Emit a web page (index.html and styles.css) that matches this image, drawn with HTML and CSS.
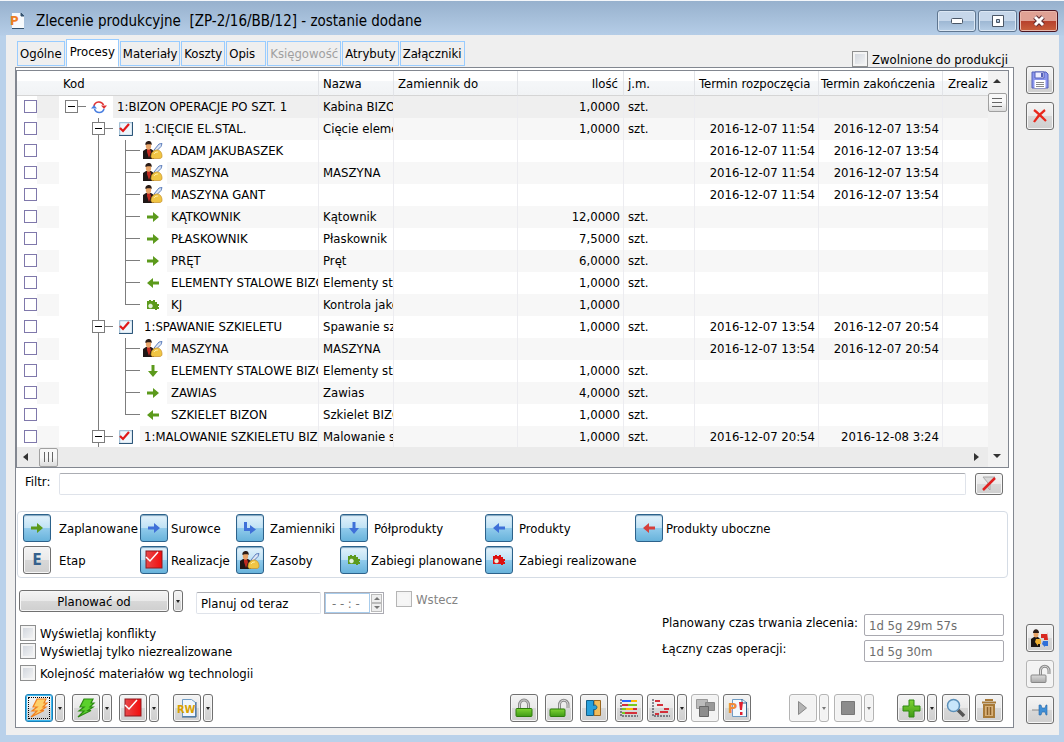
FILE: index.html
```html
<!DOCTYPE html>
<html lang="pl">
<head>
<meta charset="utf-8">
<title>Zlecenie produkcyjne</title>
<link rel="stylesheet" href="styles.css">
</head>
<body>
<svg class="defs" aria-hidden="true">
  <defs>
    <linearGradient id="g-green" x1="0" y1="0" x2="0" y2="1"><stop offset="0" stop-color="#7fd433"/><stop offset="1" stop-color="#3f9a16"/></linearGradient>
    <linearGradient id="g-grey" x1="0" y1="0" x2="0" y2="1"><stop offset="0" stop-color="#dcdcdc"/><stop offset="1" stop-color="#a8a8a8"/></linearGradient>
    <linearGradient id="g-red" x1="0" y1="0" x2="1" y2="0"><stop offset="0" stop-color="#e8484a"/><stop offset="1" stop-color="#f20d0d"/></linearGradient>
  </defs>
  <symbol id="box" viewBox="0 0 13 13"><rect x=".5" y=".5" width="12" height="12" fill="#fff" stroke="#7d7d7d"/><path d="M3 6.5h7" stroke="#000"/></symbol>
  <symbol id="arrow" viewBox="0 0 12 12"><path d="M0 4.5h6V1l6 5-6 5V7.500H0z"/></symbol>
  <symbol id="hook" viewBox="0 0 12 12"><path d="M0 0h3v6h3V3l6 4.500-6 4.500V9H0z"/></symbol>
  <symbol id="gear" viewBox="0 0 12 12"><path d="M0 2h2V1h2v1h2V1h2v2h2v2h2v2h-1v1h1v2h-2v1H8v-1H0z"/><circle cx="3.500" cy="7" r="2" fill="#e4f3dc" stroke="#fff" stroke-opacity=".4"/></symbol>
  <symbol id="worker" viewBox="0 0 20 18">
    <path d="M0 18V10l3-2h5l3 2v8z" fill="#1f1716"/><path d="M4 8h3l1 3-2 6-2-6z" fill="#c02a20"/>
    <ellipse cx="5.500" cy="5" rx="2.700" ry="3.700" fill="#e7a468"/><path d="M2.500 4C2 1 4 0 6 0s3 2 2.700 4L7.500 3.200h-3z" fill="#2b1c16"/>
    <path d="M11 9l5-6 3-.5-1 3-5 5z" fill="#dde6f5" stroke="#5d7fbd"/>
    <path d="M8 16c0-5 3-7 6-7 4 0 5 4 5 6s-1 2.500-3 2.500H9z" fill="#f0c544" stroke="#c58f26" stroke-width=".7"/><path d="M11 13c1-2 3-2 4-2" stroke="#fff0a8" fill="none"/>
  </symbol>
  <symbol id="tick" viewBox="0 0 14 14"><rect x=".7" y=".7" width="12.600" height="12.600" fill="#eef6fc" stroke="#8fb2cc"/><path d="M13.500 0v13.500H0" fill="none" stroke="#2d5679"/><path d="M1 6l3 3 6-7" fill="none" stroke="#e01818" stroke-width="2.200"/></symbol>
  <symbol id="cycle" viewBox="0 0 16 14"><path d="M3 6a5 5 0 0 1 9.500-1" fill="none" stroke="#e03434" stroke-width="1.600"/><path d="M10 5.500h6l-3 3.500z" fill="#e03434"/><path d="M13 9a5 5 0 0 1-9.500 0" fill="none" stroke="#4a7fe0" stroke-width="1.600"/><path d="M0 8.500h6L3 5z" fill="#4a7fe0"/></symbol>
  <symbol id="t0" viewBox="0 0 54 22"><use href="#box" x="6" y="4" width="13" height="13"/><path d="M19 10.500h8" stroke="#7d7d7d"/><use href="#cycle" x="32" y="4" width="16" height="14"/></symbol>
  <symbol id="t1" viewBox="0 0 81 22"><path d="M39.500 0v22M46 10.500h8" stroke="#7d7d7d"/><use href="#box" x="33" y="4" width="13" height="13"/><use href="#tick" x="60" y="4" width="14" height="14"/></symbol>
  <symbol id="t2" viewBox="0 0 108 22"><path d="M39.500 0v22M66.500 0v22M67 10.500h14" stroke="#7d7d7d"/></symbol>
  <symbol id="t2w" viewBox="0 0 108 22"><use href="#t2" width="108" height="22"/><use href="#worker" x="84" y="1" width="20" height="18"/></symbol>
  <symbol id="t2r" viewBox="0 0 108 22"><use href="#t2" width="108" height="22"/><use href="#arrow" x="88" y="5" width="12" height="12"/></symbol>
  <symbol id="t2d" viewBox="0 0 108 22"><use href="#t2" width="108" height="22"/><g transform="rotate(90 94 11)"><use href="#arrow" x="88" y="5" width="12" height="12"/></g></symbol>
  <symbol id="t2l" viewBox="0 0 108 22"><use href="#t2" width="108" height="22"/><g transform="rotate(180 94 11)"><use href="#arrow" x="88" y="5" width="12" height="12"/></g></symbol>
  <symbol id="t2e" viewBox="0 0 108 22"><path d="M39.500 0v22M66.500 0v11M67 10.500h14" stroke="#7d7d7d"/></symbol>
  <symbol id="bolt" viewBox="0 0 20 20"><path d="M8 1h9l-2 4h3l-4 4h3l-5 3.500h3L2 19l6-6H3l5-4H4z" stroke-width="1.200"/></symbol>
  <symbol id="redtick" viewBox="0 0 18 20"><rect x="1" y="1" width="16" height="17" fill="url(#g-red)" stroke="#8d1b20"/><path d="M1 7l4 4 8-9" fill="none" stroke="#fff" stroke-width="1.500"/></symbol>
  <symbol id="lock" viewBox="0 0 18 20"><path d="M4.500 11V7a4.500 5 0 0 1 9 0v4" fill="none" stroke="#8a8a8a" stroke-width="3"/><path d="M4.500 11V7a4.500 5 0 0 1 9 0v4" fill="none" stroke="#d5d5d5"/><rect x="1" y="10.500" width="16" height="8" rx="1" fill="url(#g-green)" stroke="#2e7d0c"/></symbol>
  <symbol id="unlock" viewBox="0 0 21 20"><path d="M10.500 11V7a4 4.500 0 0 1 8.500 0v3" fill="none" stroke="#8a8a8a" stroke-width="3"/><path d="M10.500 11V7a4 4.500 0 0 1 8.500 0v3" fill="none" stroke="#dedede"/><rect x="1" y="11" width="15" height="7.500" rx="1"/></symbol>
</svg>

<div class="window">
  <header class="titlebar">
    <svg class="app-icon" width="15" height="18" viewBox="0 0 15 18"><path d="M2 1h9l3 3v12H2z" fill="#f7fafc"/><path d="M11 1v3h3zM2 16.500h12" fill="#35536f" stroke="#35536f"/><text x="0" y="13" class="p-glyph">P</text></svg>
    <h1 class="title">Zlecenie produkcyjne&nbsp; [ZP-2/16/BB/12] - zostanie dodane</h1>
    <div class="win-buttons">
      <button class="win" aria-label="Minimalizuj"><svg width="14" height="8"><rect x="1.500" y="1.500" width="11" height="5" rx="1" fill="#fff" stroke="#4a5666"/></svg></button>
      <button class="win" aria-label="Maksymalizuj"><svg width="12" height="12"><path d="M.5.5h11v11H.5zM4.500 4.500v3h3v-3z" fill="#fff" fill-rule="evenodd" stroke="#4a5666"/></svg></button>
      <button class="win win-close" aria-label="Zamknij"><svg width="14" height="12" viewBox="0 0 14 12"><path d="M3 2l8 8M11 2l-8 8" stroke="#5a2a30" stroke-width="5"/><path d="M3 2l8 8M11 2l-8 8" stroke="#fff" stroke-width="3"/></svg></button>
    </div>
  </header>

  <div class="body">
    <main class="main">
      <div class="top">
        <nav class="tabs" role="tablist">
          <button class="tab" role="tab">Ogólne</button>
          <button class="tab tab-active" role="tab" aria-selected="true">Procesy</button>
          <button class="tab" role="tab">Materiały</button>
          <button class="tab" role="tab">Koszty</button>
          <button class="tab tab-opis" role="tab">Opis</button>
          <button class="tab" role="tab" disabled>Księgowość</button>
          <button class="tab" role="tab">Atrybuty</button>
          <button class="tab" role="tab">Załączniki</button>
        </nav>
        <label class="check released"><input type="checkbox" class="chk">Zwolnione do produkcji</label>
      </div>

      <section class="pane">
        <div class="list">
          <div class="list-main">
            <div class="viewport">
              <table class="table">
                <colgroup><col class="c-check"><col class="c-gap"><col><col class="c-name"><col class="c-date"><col class="c-qty"><col class="c-unit"><col class="c-date"><col class="c-date"><col class="c-done"></colgroup>
                <thead><tr><th></th><th></th><th>Kod</th><th>Nazwa</th><th>Zamiennik do</th><th class="num">Ilość</th><th>j.m.</th><th>Termin rozpoczęcia</th><th class="tight">Termin zakończenia</th><th class="done">Zrealiz</th></tr></thead>
                <tbody>
                <tr><td><input type="checkbox" class="row-chk" aria-label="1:BIZON OPERACJE PO SZT. 1"></td><td></td><td><div class="node"><svg class="tree t0"><use href="#t0"/></svg>1:BIZON OPERACJE PO SZT. 1</div></td><td>Kabina BIZON</td><td></td><td class="num">1,0000</td><td>szt.</td><td class="num"></td><td class="num"></td><td></td></tr>
                <tr><td><input type="checkbox" class="row-chk" aria-label="1:CIĘCIE EL.STAL."></td><td></td><td><div class="node"><svg class="tree t1"><use href="#t1"/></svg>1:CIĘCIE EL.STAL.</div></td><td>Cięcie elementów</td><td></td><td class="num">1,0000</td><td>szt.</td><td class="num">2016-12-07 11:54</td><td class="num">2016-12-07 13:54</td><td></td></tr>
                <tr><td><input type="checkbox" class="row-chk" aria-label="ADAM JAKUBASZEK"></td><td></td><td><div class="node"><svg class="tree t2"><use href="#t2w"/></svg>ADAM JAKUBASZEK</div></td><td></td><td></td><td class="num"></td><td></td><td class="num">2016-12-07 11:54</td><td class="num">2016-12-07 13:54</td><td></td></tr>
                <tr><td><input type="checkbox" class="row-chk" aria-label="MASZYNA"></td><td></td><td><div class="node"><svg class="tree t2"><use href="#t2w"/></svg>MASZYNA</div></td><td>MASZYNA</td><td></td><td class="num"></td><td></td><td class="num">2016-12-07 11:54</td><td class="num">2016-12-07 13:54</td><td></td></tr>
                <tr><td><input type="checkbox" class="row-chk" aria-label="MASZYNA GANT"></td><td></td><td><div class="node"><svg class="tree t2"><use href="#t2w"/></svg>MASZYNA GANT</div></td><td></td><td></td><td class="num"></td><td></td><td class="num">2016-12-07 11:54</td><td class="num">2016-12-07 13:54</td><td></td></tr>
                <tr><td><input type="checkbox" class="row-chk" aria-label="KĄTKOWNIK"></td><td></td><td><div class="node"><svg class="tree t2"><use href="#t2r"/></svg>KĄTKOWNIK</div></td><td>Kątownik</td><td></td><td class="num">12,0000</td><td>szt.</td><td></td><td></td><td></td></tr>
                <tr><td><input type="checkbox" class="row-chk" aria-label="PŁASKOWNIK"></td><td></td><td><div class="node"><svg class="tree t2"><use href="#t2r"/></svg>PŁASKOWNIK</div></td><td>Płaskownik</td><td></td><td class="num">7,5000</td><td>szt.</td><td></td><td></td><td></td></tr>
                <tr><td><input type="checkbox" class="row-chk" aria-label="PRĘT"></td><td></td><td><div class="node"><svg class="tree t2"><use href="#t2r"/></svg>PRĘT</div></td><td>Pręt</td><td></td><td class="num">6,0000</td><td>szt.</td><td></td><td></td><td></td></tr>
                <tr><td><input type="checkbox" class="row-chk" aria-label="ELEMENTY STALOWE BIZON"></td><td></td><td><div class="node"><svg class="tree t2"><use href="#t2l"/></svg>ELEMENTY STALOWE BIZON</div></td><td>Elementy stalowe</td><td></td><td class="num">1,0000</td><td>szt.</td><td></td><td></td><td></td></tr>
                <tr><td><input type="checkbox" class="row-chk" aria-label="KJ"></td><td></td><td><div class="node"><svg class="tree t2"><use href="#t2e"/><use href="#gear" x="88" y="5" width="12" height="12"/></svg>KJ</div></td><td>Kontrola jakości</td><td></td><td class="num">1,0000</td><td></td><td></td><td></td><td></td></tr>
                <tr><td><input type="checkbox" class="row-chk" aria-label="1:SPAWANIE SZKIELETU"></td><td></td><td><div class="node"><svg class="tree t1"><use href="#t1"/></svg>1:SPAWANIE SZKIELETU</div></td><td>Spawanie szkieletu</td><td></td><td class="num">1,0000</td><td>szt.</td><td class="num">2016-12-07 13:54</td><td class="num">2016-12-07 20:54</td><td></td></tr>
                <tr><td><input type="checkbox" class="row-chk" aria-label="MASZYNA, spawanie"></td><td></td><td><div class="node"><svg class="tree t2"><use href="#t2w"/></svg>MASZYNA</div></td><td>MASZYNA</td><td></td><td class="num"></td><td></td><td class="num">2016-12-07 13:54</td><td class="num">2016-12-07 20:54</td><td></td></tr>
                <tr><td><input type="checkbox" class="row-chk" aria-label="ELEMENTY STALOWE BIZON, spawanie"></td><td></td><td><div class="node"><svg class="tree t2"><use href="#t2d"/></svg>ELEMENTY STALOWE BIZON</div></td><td>Elementy stalowe</td><td></td><td class="num">1,0000</td><td>szt.</td><td></td><td></td><td></td></tr>
                <tr><td><input type="checkbox" class="row-chk" aria-label="ZAWIAS"></td><td></td><td><div class="node"><svg class="tree t2"><use href="#t2r"/></svg>ZAWIAS</div></td><td>Zawias</td><td></td><td class="num">4,0000</td><td>szt.</td><td></td><td></td><td></td></tr>
                <tr><td><input type="checkbox" class="row-chk" aria-label="SZKIELET BIZON"></td><td></td><td><div class="node"><svg class="tree t2"><use href="#t2e"/><g transform="rotate(180 94 11)"><use href="#arrow" x="88" y="5" width="12" height="12"/></g></svg>SZKIELET BIZON</div></td><td>Szkielet BIZON</td><td></td><td class="num">1,0000</td><td>szt.</td><td></td><td></td><td></td></tr>
                <tr><td><input type="checkbox" class="row-chk" aria-label="1:MALOWANIE SZKIELETU BIZON"></td><td></td><td><div class="node"><svg class="tree t1"><use href="#t1"/></svg>1:MALOWANIE SZKIELETU BIZON</div></td><td>Malowanie szkieletu</td><td></td><td class="num">1,0000</td><td>szt.</td><td class="num">2016-12-07 20:54</td><td class="num">2016-12-08 3:24</td><td></td></tr>
                </tbody>
              </table>
            </div>
            <div class="hscroll">
              <svg width="8" height="10"><path d="M6 1v8L1 5z"/></svg>
              <div class="thumb"><svg width="11" height="10"><path d="M1.500 0v10M5.500 0v10M9.500 0v10" stroke="#666"/></svg></div>
              <svg class="push" width="8" height="10"><path d="M2 1v8l5-4z"/></svg>
            </div>
          </div>
          <div class="vscroll">
            <svg width="10" height="22"><path d="M1 12h8L5 8z"/></svg>
            <div class="thumb"><svg width="10" height="11"><path d="M0 1.500h10M0 5.500h10M0 9.500h10" stroke="#666"/></svg></div>
            <svg class="down" width="10" height="22"><path d="M1 9h8l-4 4z"/></svg>
          </div>
        </div>

        <div class="filter">
          <label for="filter">Filtr:</label>
          <input id="filter" type="text" class="field filter-field">
          <button class="btn filter-btn" aria-label="Wyczyść filtr"><svg width="16" height="16"><path d="M2 1h12L9 7v7l-2-2V7z" fill="#d8d8d8" stroke="#aaa"/><path d="M2 14L14 2" stroke="#e02020" stroke-width="2.500"/></svg></button>
        </div>

        <div class="legend">
          <div class="item gap-l"><button id="b1" class="btn blue"><svg width="12" height="12" fill="#5c9a1c"><use href="#arrow"/></svg></button><label for="b1">Zaplanowane</label></div>
          <div class="item"><button id="b2" class="btn blue"><svg width="12" height="12" fill="#3f70d8"><use href="#arrow"/></svg></button><label for="b2">Surowce</label></div>
          <div class="item gap-m"><button id="b3" class="btn blue"><svg width="12" height="12" fill="#3f70d8"><use href="#hook"/></svg></button><label for="b3">Zamienniki</label></div>
          <div class="item gap-m"><button id="b4" class="btn blue"><svg width="12" height="12" viewBox="0 0 12 12" fill="#3f70d8"><g transform="rotate(90 6 6)"><use href="#arrow"/></g></svg></button><label for="b4">Półprodukty</label></div>
          <div class="item gap-m"><button id="b5" class="btn blue"><svg width="12" height="12" viewBox="0 0 12 12" fill="#3f70d8"><g transform="rotate(180 6 6)"><use href="#arrow"/></g></svg></button><label for="b5">Produkty</label></div>
          <div class="item"><button id="b6" class="btn blue"><svg width="12" height="12" viewBox="0 0 12 12" fill="#d6403c"><g transform="rotate(180 6 6)"><use href="#arrow"/></g></svg></button><label for="b6">Produkty uboczne</label></div>
          <div class="item gap-l"><button id="b7" class="btn stage">E</button><label for="b7">Etap</label></div>
          <div class="item"><button id="b8" class="btn blue"><svg width="18" height="20"><use href="#redtick"/></svg></button><label for="b8">Realizacje</label></div>
          <div class="item gap-m"><button id="b9" class="btn blue"><svg width="20" height="18"><use href="#worker"/></svg></button><label for="b9">Zasoby</label></div>
          <div class="item"><button id="b10" class="btn blue"><svg width="12" height="12" fill="#5c9a1c"><use href="#gear"/></svg></button><label for="b10">Zabiegi planowane</label></div>
          <div class="item gap-m"><button id="b11" class="btn blue"><svg width="12" height="12" fill="#dd1010"><use href="#gear"/></svg></button><label for="b11">Zabiegi realizowane</label></div>
        </div>

        <div class="settings">
          <div class="plan">
            <div class="plan-row">
              <button class="btn plan-btn">Planować od</button>
              <button class="btn drop plan-drop" aria-label="Opcje planowania"><i class="caret"></i></button>
              <input type="text" class="field plan-field" value="Planuj od teraz" aria-label="Planuj od">
              <div class="time"><input type="text" class="time-field" value="- - : -" aria-label="Godzina" disabled><div class="spin"><button aria-label="Więcej" disabled><i class="caret up"></i></button><button aria-label="Mniej" disabled><i class="caret"></i></button></div></div>
              <label class="check off"><input type="checkbox" class="chk" disabled>Wstecz</label>
            </div>
            <div class="options">
              <label class="check"><input type="checkbox" class="chk">Wyświetlaj konflikty</label>
              <label class="check"><input type="checkbox" class="chk">Wyświetlaj tylko niezrealizowane</label>
              <label class="check spaced"><input type="checkbox" class="chk">Kolejność materiałów wg technologii</label>
            </div>
          </div>
          <div class="times">
            <label for="tp">Planowany czas trwania zlecenia:</label><input id="tp" class="readout" type="text" value="1d 5g 29m 57s" readonly>
            <label for="tl">Łączny czas operacji:</label><input id="tl" class="readout" type="text" value="1d 5g 30m" readonly>
          </div>
        </div>

        <div class="toolbar">
          <div class="group left">
            <div class="split"><button class="btn focus" aria-label="Generuj"><svg width="20" height="20" fill="#fdd06a" stroke="#f08020"><use href="#bolt"/></svg></button><button class="btn drop" aria-label="Więcej"><i class="caret"></i></button></div>
            <div class="split"><button class="btn" aria-label="Uruchom"><svg width="20" height="20" fill="#5bd02c" stroke="#2c8a12"><use href="#bolt"/></svg></button><button class="btn drop" aria-label="Więcej"><i class="caret"></i></button></div>
            <div class="split"><button class="btn" aria-label="Realizacja"><svg width="18" height="20"><use href="#redtick"/></svg></button><button class="btn drop" aria-label="Więcej"><i class="caret"></i></button></div>
            <div class="split rw-split"><button class="btn" aria-label="RW"><svg width="20" height="20"><path d="M5.500 1.500h9l4 3v14h-13z" fill="#eef6fd" stroke="#6f9cc4"/><path d="M19 4v15H5" fill="none" stroke="#35618d"/><text x="0" y="15" class="rw-glyph">RW</text></svg></button><button class="btn drop" aria-label="Więcej"><i class="caret"></i></button></div>
          </div>
          <div class="group center">
            <div class="trio">
              <button class="btn" aria-label="Zablokuj"><svg width="18" height="20"><use href="#lock"/></svg></button>
              <button class="btn" aria-label="Odblokuj"><svg width="21" height="20" fill="url(#g-green)" stroke="#2e7d0c"><use href="#unlock"/></svg></button>
              <button class="btn" aria-label="Moduły"><svg width="16" height="16"><path d="M8 .5h6.500v15H8z" fill="#f2bd5c" stroke="#9a6720"/><path d="M.5.5h7v5c4-2 5 5 0 4v6h-7z" fill="#28a0dc" stroke="#146088"/></svg></button>
              <button class="btn" aria-label="Harmonogram"><svg width="18" height="20"><path d="M1 1v17h17" fill="none" stroke="#223" stroke-dasharray="2 1"/><path d="M2 3h9" stroke="#2463ff" stroke-width="2"/><path d="M11 3h6M5 11h8" stroke="#ffb800" stroke-width="2"/><path d="M2 7h6M13 11h4M5 15h12" stroke="#d42f3a" stroke-width="2"/><path d="M8 7h9M2 11h4M2 15h3" stroke="#78c820" stroke-width="2"/></svg></button>
            </div>
            <div class="split"><button class="btn" aria-label="Gantt"><svg width="18" height="20"><path d="M1 1v17h17" fill="none" stroke="#223" stroke-dasharray="2 1"/><path d="M3 3h5M5 7h6M12 11h5M8 14h8M3 16h4" stroke="#d42f3a" stroke-width="2"/></svg></button><button class="btn drop" aria-label="Więcej"><i class="caret"></i></button></div>
            <div class="pair">
              <button class="btn" aria-label="Kopie" disabled><svg width="19" height="19"><path d="M.5.5h11v9H.500z" fill="#bbb" stroke="#999"/><path d="M9.500 3.500h9v8h-9z" fill="#999" stroke="#888"/><path d="M3.500 7.500h9v10h-9z" fill="#8c8c8c" stroke="#666"/></svg></button>
              <button class="btn" aria-label="Problemy"><svg width="19" height="20"><path d="M4.500 1.500h10l4 3v14h-14z" fill="#f3f9fe" stroke="#6f9cc4"/><path d="M14 1v4h4M18.500 4v15" fill="none" stroke="#35618d"/><text x="0" y="15" class="p-big">P</text><path d="M11 4h4l-1 8h-2zM12 14h2.500v3H12z" fill="#e02030"/></svg></button>
            </div>
          </div>
          <div class="group right">
            <div class="split"><button class="btn" aria-label="Start" disabled><svg width="12" height="16"><path d="M1.500 1.500v13l8-6.500z" fill="#b4b4b4" stroke="#888"/></svg></button><button class="btn drop" aria-label="Więcej" disabled><i class="caret"></i></button></div>
            <div class="split"><button class="btn" aria-label="Stop" disabled><svg width="14" height="14"><path d="M.5.5h13v13H.500z" fill="#8c8c8c" stroke="#777"/></svg></button><button class="btn drop" aria-label="Więcej" disabled><i class="caret"></i></button></div>
            <div class="split add"><button class="btn" aria-label="Dodaj"><svg width="19" height="19"><path d="M7 1h5v6h6v5h-6v6H7v-6H1V7h6z" fill="url(#g-green)" stroke="#2e8a12"/></svg></button><button class="btn drop" aria-label="Więcej"><i class="caret"></i></button></div>
            <button class="btn" aria-label="Szukaj"><svg width="20" height="20"><path d="M12 12l6 6" stroke="#555" stroke-width="3.500"/><circle cx="7.500" cy="7.500" r="6" fill="#c8e6fa" stroke="#5b8fb8" stroke-width="1.500"/></svg></button>
            <button class="btn trash" aria-label="Usuń"><svg width="16" height="19"><path d="M5 2V1h6v1M1 3.500h14" fill="none" stroke="#a87a38" stroke-width="2"/><path d="M3 6h10v12H3z" fill="#d8b078" stroke="#a87a38" stroke-width="2"/><path d="M6.500 8v8M9.500 8v8" stroke="#8a5f28" stroke-width="1.500"/></svg></button>
          </div>
        </div>
      </section>
    </main>

    <aside class="side">
      <button class="btn" aria-label="Zapisz"><svg width="18" height="18"><path d="M1 1h14l2 2v14H1z" fill="#8b96ee" stroke="#5560b8"/><path d="M4 1h9v6H4z" fill="#eef" stroke="#5560b8"/><path d="M10 2h2v4h-2z" fill="#5560b8"/><path d="M3.500 9h11v8h-11z" fill="#fff"/><path d="M5 11.500h8M5 13.500h8M5 15.500h8" stroke="#888"/></svg></button>
      <button class="btn" aria-label="Anuluj"><svg width="16" height="16"><path d="M2 2c4 3 8 7 12 11M13 2C9 5 5 9 2 14" fill="none" stroke="#e8281c" stroke-width="2.200"/></svg></button>
      <button class="btn person" aria-label="Operator"><svg width="20" height="19"><path d="M1 18v-8l3-2h4l2 2v8z" fill="#1c1614"/><ellipse cx="6" cy="5" rx="2.500" ry="3.500" fill="#e7a468"/><path d="M3 4c0-5 6-5 6 0z" fill="#2b1c16"/><path d="M11 5h6V3l1 8h-4V9h-3z" fill="#d82820"/><path d="M6 10h5v5H8v2l-3-4z" fill="#f0b030"/><path d="M13 12h5v5h-3v1l-3-3z" fill="#3070d8"/></svg></button>
      <button class="btn" aria-label="Odblokuj okno" disabled><svg width="21" height="20" fill="url(#g-grey)" stroke="#888"><use href="#unlock"/></svg></button>
      <button class="btn pin" aria-label="Przypnij"><svg width="18" height="12"><path d="M1 6h8" stroke="#888"/><path d="M8 1h2l1 3h3l1-3h1v10h-1l-1-3h-3l-1 3H8z" fill="#3f8fd6" stroke="#2a6aa8" stroke-width=".6"/></svg></button>
    </aside>
  </div>
</div>
</body>
</html>
```
FILE: styles.css
```css
* { box-sizing: border-box; }
body, button, input, label, h1 { margin: 0; font-family: "DejaVu Sans Condensed", "DejaVu Sans", sans-serif; font-size: 13px; color: #000; }
body { font-size: 13px; }
table { font-size: 13px; }
button, input { padding: 0; }
svg { display: block; flex: none; }
.defs { position: absolute; width: 0; height: 0; }

.window { display: flex; flex-direction: column; height: 100vh; min-width: 1040px; background: #b9d1ea; padding: 0 5px 7px 6px; border-top: 1px solid #f4f7fa; background-image: linear-gradient(#97b1cd, #b5cde7 34px, #b9d1ea 35px); }
.titlebar { display: flex; align-items: center; height: 34px; padding-left: 4px; padding-top: 6px; flex: none; }
.title { flex: 1; font-size: 15px; font-weight: normal; margin-left: 11px; line-height: 20px; white-space: nowrap; }
.p-glyph { font: bold 13px "DejaVu Sans Condensed", sans-serif; fill: #ef7d22; }
.win-buttons { display: flex; gap: 2px; margin-right: 1px; }
.win { width: 39px; height: 22px; display: flex; align-items: center; justify-content: center; border: 1px solid #5f7690; border-radius: 3px; background: linear-gradient(#c6d7ea 50%, #9db7d3 50%, #b7cee6); box-shadow: inset 0 0 0 1px #dbe7f4; }
.win-close { border-color: #4a1420; background: linear-gradient(#dfa194 50%, #b6402c 50%, #c9603c); box-shadow: inset 0 0 0 1px #e8b8ac; }

.body { flex: 1; min-height: 0; display: flex; background: #efefef; padding-left: 9px; }
.main { flex: 1; min-width: 0; display: flex; flex-direction: column; padding-bottom: 7px; }
.top { display: flex; justify-content: space-between; align-items: flex-end; height: 32px; padding: 0 6px 0 2px; flex: none; }
.tabs { display: flex; align-items: flex-end; gap: 1px; }
.tab { height: 25px; margin-bottom: 1px; padding: 0 2px; border: 1px solid #99ccff; background: #efefef; }
.tab-opis { padding-right: 10px; }
.tab:disabled { color: #a0a0a0; }
.tab-active { height: 28px; margin-bottom: 0; padding: 0 3px 4px; background: #fff; border-bottom-color: #fff; }

.check { display: flex; align-items: center; gap: 4px; height: 16px; white-space: nowrap; }
.chk { appearance: none; flex: none; width: 16px; height: 16px; margin: 0; border: 1px solid #8e8f8f; background: linear-gradient(135deg, #cdd2da, #f8f8f8); box-shadow: inset 0 0 0 2px #f4f4f4; }
.off { color: #838383; }
.off .chk { border-color: #b5b5b5; background: #f6f6f6; }

.pane { flex: 1; min-height: 0; display: flex; flex-direction: column; background: #fff; border: 1px solid #828790; padding-top: 2px; }
.list { flex: 1; min-height: 0; display: flex; border: 1px solid #828790; margin-right: 4px; }
.list-main { flex: 1; min-width: 0; display: flex; flex-direction: column; }
.viewport { flex: 1; min-height: 0; overflow: hidden; }
.table { width: 100%; table-layout: fixed; border-collapse: separate; border-spacing: 0; }
.c-check { width: 20px; } .c-gap { width: 22px; } .c-name { width: 75px; } .c-date { width: 124px; } .c-qty { width: 106px; } .c-unit { width: 71px; } .c-done { width: 45px; }
.table th, .table td { padding: 0 3px 0 4px; text-align: left; font-weight: normal; overflow: hidden; white-space: nowrap; border-right: 1px solid #ececf0; }
.table th { height: 25px; background: linear-gradient(#fff 40%, #f5f7f9 42%, #f1f3f5); border-bottom: 1px solid #d5d5d5; border-right-color: #e2e4e8; }
.table td { height: 22px; line-height: 22px; }
.table td:nth-child(-n+2), .table th:nth-child(-n+2), .table td:last-child, .table th:last-child { border-right: 0; }
.table tr:nth-child(even) td { background: #f7f7f7; }
.table tr:first-child td { background: #efefef; }
.table tr td:first-child { background: #fff; padding: 0 0 0 7px; }
.table td:nth-child(3) { padding: 0; }
.table .num { text-align: right; }
.table th.num { padding-right: 5px; }
.table th.tight { padding: 0 2px; }
.table th.done { padding: 0 0 0 5px; }
.row-chk { appearance: none; display: block; width: 13px; height: 13px; margin: 0 0 2px; border: 1px solid #7f78ab; background: #fff; }
.node { display: flex; height: 22px; gap: 4px; }
.tree { height: 22px; background: #fff; fill: #5c9a1c; }
.t0 { width: 54px; } .t1 { width: 81px; } .t2 { width: 108px; }
.hscroll { height: 20px; display: flex; align-items: center; background: #ebebeb; padding: 0 8px 0 5px; gap: 9px; flex: none; }
.hscroll > svg, .vscroll > svg { fill: #333; }
.push { margin-left: auto; }
.vscroll { width: 20px; display: flex; flex-direction: column; align-items: center; background: #f2f2f2; padding-right: 2px; }
.down { margin-top: auto; }
.thumb { width: 19px; height: 19px; display: flex; align-items: center; justify-content: center; border: 1px solid #a0a0a0; border-radius: 2px; background: linear-gradient(#f8f8f8 50%, #dcdcdc); }

.filter { display: flex; align-items: center; padding: 4px 10px 0 9px; height: 28px; flex: none; }
.filter label { width: 34px; line-height: 20px; padding-bottom: 4px; }
.field { height: 22px; border: 1px solid #dfe3ea; border-top-color: #abadb3; border-radius: 2px; background: #fff; padding: 0 4px; min-width: 0; }
.filter-field { flex: 1; margin-right: 9px; }
.filter .filter-btn { height: 22px; }

.btn { flex: none; width: 28px; height: 28px; display: flex; align-items: center; justify-content: center; border: 1px solid #707070; border-radius: 3px; background: linear-gradient(#f4f4f4, #e9e9e9 50%, #d8d8d8 50%, #cfcfcf); box-shadow: inset 0 0 0 1px #f6f6f6; }
.btn:disabled { border-color: #b4b4b4; background: #f3f3f3; }
.blue { border-color: #2c628b; background: linear-gradient(#e3f2fb, #bfe2f5 50%, #91cbec 50%, #68b3db); box-shadow: inset 0 1px 1px #7fa5bf; }
.stage { color: #35618d; font-size: 15px; font-weight: bold; }
.focus { border-color: #1a7fb8; box-shadow: inset 0 0 0 1px #3db8ee; outline: 1px dotted #000; outline-offset: -4px; }
.drop { width: 10px; }
.caret { border: 2px solid transparent; border-top: 3px solid #222; border-bottom: 0; }
.caret.up { border-top: 0; border-bottom: 3px solid #222; }
.spin .caret { border-left-width: 3px; border-right-width: 3px; }
button:disabled .caret { border-top-color: #777; border-bottom-color: #777; }

.legend { margin: 15px 5px 0 1px; padding: 2px 5px 3px; border: 1px solid #d5dce5; border-radius: 4px; display: grid; grid-template-columns: 117px 96px 104px 145px 150px 1fr; row-gap: 4px; flex: none; }
.item { display: flex; align-items: center; gap: 3px; white-space: nowrap; }
.gap-m { gap: 6px; }
.gap-l { gap: 8px; }

.settings { display: flex; justify-content: space-between; padding: 12px 9px 0 3px; flex: none; }
.plan-row { display: flex; align-items: flex-start; }
.plan-btn { width: 150px; height: 22px; }
.plan-drop { height: 22px; margin: 0 13px 0 4px; }
.plan-field { width: 125px; margin: 2px 3px 0 0; }
.time { display: flex; width: 60px; height: 22px; margin-top: 2px; border: 1px solid #ababb3; background: #fff; }
.time-field { flex: 1; min-width: 0; border: 1px solid #a8ccec; background: #fff; color: #777; padding-left: 6px; }
.spin { display: flex; flex-direction: column; width: 13px; padding: 1px; }
.spin button { flex: 1; display: flex; align-items: center; justify-content: center; border: 1px solid #bbb; background: #eee; }
.plan-row .off { margin: 1px 0 0 12px; }
.options { display: flex; flex-direction: column; gap: 2px; padding: 11px 0 0 1px; }
.spaced { margin-top: 4px; }
.times { display: grid; grid-template-columns: auto 140px; gap: 4px 6px; align-content: start; padding-top: 24px; }
.times label { line-height: 18px; }
.readout { height: 22px; border: 1px solid #a9a9b0; border-radius: 2px; padding: 0 4px; color: #6d6d6d; background: #fff; }

.toolbar { display: flex; align-items: center; padding: 13px 10px 5px 9px; flex: none; }
.group { display: flex; }
.split { display: flex; gap: 2px; }
.left { gap: 7px; flex: 1; }
.rw-split { margin-left: 7px; }
.right { gap: 5px; }
.center { margin-right: 38px; gap: 4px; }
.trio { display: flex; gap: 7px; }
.pair { display: flex; gap: 4px; }
.add { margin-left: 18px; }
.rw-glyph { font: bold 11px "DejaVu Sans Condensed", sans-serif; fill: #d8a000; }
.p-big { font: bold 14px "DejaVu Sans Condensed", sans-serif; fill: #ef8a3a; }

.side { display: flex; flex-direction: column; gap: 8px; padding: 31px 5px 11px 12px; flex: none; }
.person { margin-top: auto; }
```
